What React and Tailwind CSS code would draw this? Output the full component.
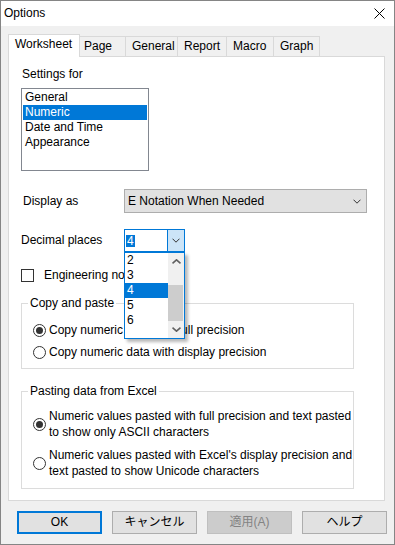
import React from 'react';

const FONT = "font-['Liberation_Sans','Noto_Sans_CJK_JP',sans-serif]";

const SETTINGS = ['General', 'Numeric', 'Date and Time', 'Appearance'];
const PLACES = ['2', '3', '4', '5', '6'];

const TABS = [
  { label: 'Page', w: 'w-[47px]', pl: 'pl-[4px]' },
  { label: 'General', w: 'w-[53px]', pl: 'pl-[6px]' },
  { label: 'Report', w: 'w-[50px]', pl: 'pl-[6px]' },
  { label: 'Macro', w: 'w-[48px]', pl: 'pl-[6px]' },
  { label: 'Graph', w: 'w-[47px]', pl: 'pl-[6px]' },
];

const Chevron = ({ up = false, color = '#333', width = 1, w = 8, h = 5 }) => (
  <svg width={w} height={h} viewBox={`0 0 ${w} ${h}`} className="block">
    <path
      d={up ? `M0.5 ${h - 0.7} L${w / 2} 0.8 L${w - 0.5} ${h - 0.7}` : `M0.5 0.7 L${w / 2} ${h - 0.8} L${w - 0.5} 0.7`}
      fill="none"
      stroke={color}
      strokeWidth={width}
    />
  </svg>
);

const Radio = ({ checked }) => (
  <span className="w-[13px] h-[13px] rounded-full border border-[#333] bg-white flex items-center justify-center shrink-0">
    {checked && <span className="w-[7px] h-[7px] rounded-full bg-[#333]" />}
  </span>
);

const Button = ({ children, primary, disabled }) => (
  <button
    type="button"
    className={
      'w-[85px] h-[23px] flex items-center justify-center text-[12px] leading-[15px] ' +
      (primary
        ? 'border-2 border-[#0078d7] bg-[#e1e1e1] text-black'
        : disabled
        ? 'border border-[#bfbfbf] bg-[#cccccc] text-[#838383]'
        : 'border border-[#adadad] bg-[#e1e1e1] text-black')
    }
  >
    {children}
  </button>
);

export default function App() {
  return (
    <div className={`w-[395px] h-[545px] bg-[#f0f0f0] border border-[#858585] flex flex-col text-black text-[12px] leading-[15px] ${FONT}`}>
      {/* Title bar */}
      <div className="h-[25px] bg-white flex items-center justify-between shrink-0">
        <span className="pl-[3px]">Options</span>
        <svg width="11" height="11" viewBox="0 0 11 11" className="mr-[9px]">
          <path d="M0.5 0.5 L10.5 10.5 M10.5 0.5 L0.5 10.5" stroke="#000" strokeWidth="1" fill="none" />
        </svg>
      </div>

      {/* Tabs */}
      <div className="h-[31px] flex items-end pl-[7px] -mb-px relative z-10 shrink-0">
        <div className="w-[72px] h-[23px] bg-white border border-b-0 border-[#d9d9d9] pl-[6px] pt-[2px] relative z-10">
          Worksheet
        </div>
        {TABS.map((t) => (
          <div
            key={t.label}
            className={`${t.w} ${t.pl} h-[20px] mb-px -ml-px bg-[#f0f0f0] border border-b-0 border-[#d9d9d9] pt-[2px]`}
          >
            {t.label}
          </div>
        ))}
      </div>

      {/* Panel */}
      <div className="ml-[7px] w-[377px] h-[445px] bg-white border border-[#d9d9d9] pl-[12px] pt-[10px] flex flex-col shrink-0">
        <div className="pl-px">Settings for</div>

        <div className="mt-[6px] w-[128px] h-[83px] border border-[#828790] bg-white p-px">
          {SETTINGS.map((s) => (
            <div
              key={s}
              className={'h-[15px] pl-[2px] ' + (s === 'Numeric' ? 'bg-[#0078d7] text-white' : '')}
            >
              {s}
            </div>
          ))}
        </div>

        {/* Display as */}
        <div className="mt-[18px] h-[24px] flex items-center">
          <span className="w-[103px] pl-[2px]">Display as</span>
          <div className="w-[243px] h-[24px] border border-[#adadad] bg-[#e1e1e1] flex items-center justify-between pl-[3px] pr-[5px]">
            <span>E Notation When Needed</span>
            <Chevron />
          </div>
        </div>

        {/* Decimal places */}
        <div className="mt-[16px] h-[23px] flex items-center">
          <span className="w-[103px]">Decimal places</span>
          <div className="relative z-20">
            <div className="w-[61px] h-[23px] border border-[#0078d7] bg-white flex">
              <div className="flex-1 flex items-center pl-[1px]">
                <span className="bg-[#0078d7] text-white leading-[12px] px-px">4</span>
              </div>
              <div className="w-[17px] bg-[#cce4f7] border-l border-[#0078d7] flex items-center justify-center">
                <Chevron />
              </div>
            </div>
            {/* open list */}
            <div className="absolute left-0 top-[23px] w-[61px] h-[87px] border border-[#0078d7] bg-white flex shadow-[3px_3px_3px_rgba(0,0,0,0.28)]">
              <div className="flex-1 flex flex-col">
                {PLACES.map((p) => (
                  <div
                    key={p}
                    className={'h-[15px] pl-[2px] ' + (p === '4' ? 'bg-[#0078d7] text-white' : '')}
                  >
                    {p}
                  </div>
                ))}
              </div>
              <div className="w-[16px] bg-[#f0f0f0] flex flex-col">
                <div className="h-[17px] flex items-center justify-center">
                  <Chevron up color="#606060" width={1.6} w={9} h={5} />
                </div>
                <div className="h-[15px]" />
                <div className="h-[36px] w-[15px] bg-[#cdcdcd]" />
                <div className="h-[17px] flex items-center justify-center">
                  <Chevron color="#606060" width={1.6} w={9} h={5} />
                </div>
              </div>
            </div>
          </div>
        </div>

        {/* Engineering notation */}
        <div className="mt-[16px] h-[15px] flex items-center gap-[10px]">
          <span className="w-[13px] h-[13px] border border-[#333] bg-white" />
          <span>Engineering notation</span>
        </div>

        {/* Copy and paste */}
        <fieldset className="mt-[13px] w-[333px] border border-[#dcdcdc] pb-[8px]">
          <legend className="ml-[6px] px-[2px]">Copy and paste</legend>
          <div className="mt-[12px] ml-[11px] flex items-center gap-[3px]">
            <Radio checked />
            <span>Copy numeric data with full precision</span>
          </div>
          <div className="mt-[7px] ml-[11px] flex items-center gap-[3px]">
            <Radio />
            <span>Copy numeric data with display precision</span>
          </div>
        </fieldset>

        {/* Pasting data from Excel */}
        <fieldset className="mt-[15px] w-[333px] border border-[#dcdcdc] pb-[9px]">
          <legend className="ml-[6px] px-[2px]">Pasting data from Excel</legend>
          <div className="mt-[9px] ml-[11px] flex items-center gap-[3px] leading-[16px]">
            <Radio checked />
            <span>
              Numeric values pasted with full precision and text pasted
              <br />
              to show only ASCII characters
            </span>
          </div>
          <div className="mt-[7px] ml-[11px] flex items-center gap-[3px] leading-[16px]">
            <Radio />
            <span>
              Numeric values pasted with Excel's display precision and
              <br />
              text pasted to show Unicode characters
            </span>
          </div>
        </fieldset>
      </div>

      {/* Buttons */}
      <div className="mt-[10px] pl-[16px] flex gap-[10px]">
        <Button primary>OK</Button>
        <Button>キャンセル</Button>
        <Button disabled>適用(A)</Button>
        <Button>ヘルプ</Button>
      </div>
    </div>
  );
}
